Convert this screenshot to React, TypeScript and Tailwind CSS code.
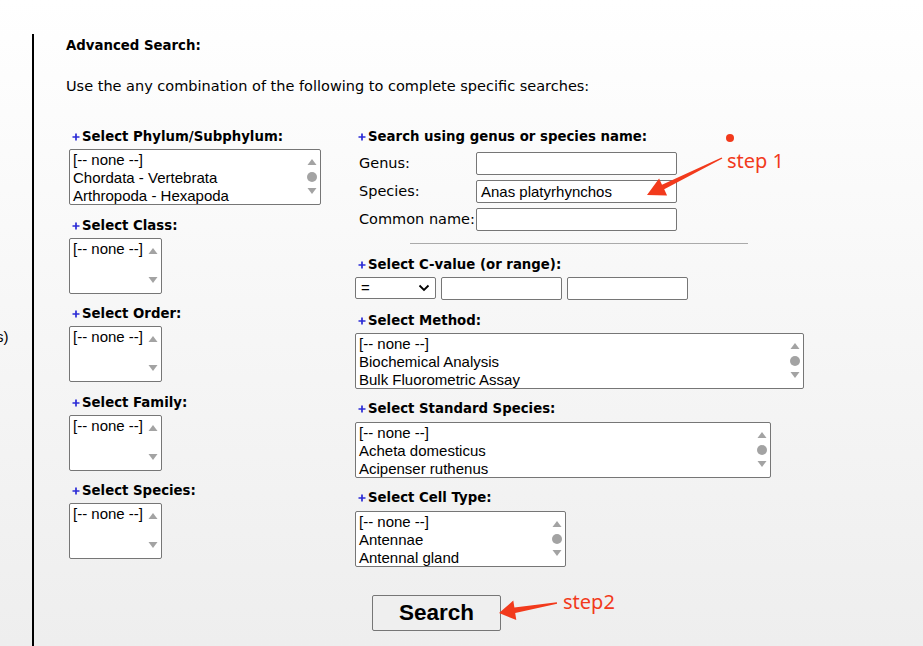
import React from "react"

const sans = "font-['DejaVu_Sans',Verdana,sans-serif]"
const arial = "font-['Liberation_Sans',Arial,sans-serif]"

function Plus() {
  return (
    <svg width="8" height="8" viewBox="0 0 8 8" className="shrink-0">
      <path d="M4 0.5v7M0.5 4h7" stroke="#2b2bd6" strokeWidth="1.7" />
    </svg>
  )
}

function Label({ text }: { text: string }) {
  return (
    <div className="flex items-center gap-[2px] ml-[3px] h-[16px] text-[13.3px] font-bold leading-[16px] text-black">
      <Plus />
      <span>{text}</span>
    </div>
  )
}

function Tri({ up }: { up?: boolean }) {
  return (
    <svg width="10" height="8" viewBox="0 0 10 8">
      <path d={up ? "M5 1 L9.5 7 H0.5 Z" : "M0.5 1 H9.5 L5 7 Z"} fill="#a3a3a3" />
    </svg>
  )
}

function ListBox({ items, w }: { items: string[]; w: string }) {
  const many = items.length > 1
  return (
    <div className={`flex h-[56px] ${w} border border-[#767676] rounded-[2px] bg-white ${arial}`}>
      <div className="flex-1 pl-[3px] pt-[1px] text-[15px] leading-[18px] text-black whitespace-nowrap overflow-hidden">
        {items.map((t) => (
          <div key={t}>{t}</div>
        ))}
      </div>
      <div className="w-[14px] mr-[1px] flex flex-col items-center justify-between pt-[8px] pb-[9px]">
        <Tri up />
        {many && <div className="w-[10px] h-[10px] rounded-full bg-[#a3a3a3]" />}
        <Tri />
      </div>
    </div>
  )
}

function TextBox({ value }: { value?: string }) {
  return (
    <div className={`h-[23px] w-[201px] border border-[#767676] rounded-[2px] bg-white pl-[4px] text-[15px] leading-[21px] text-black ${arial}`}>
      {value}
    </div>
  )
}

function LeftGroup({ label, items, w, first }: { label: string; items: string[]; w: string; first?: boolean }) {
  return (
    <div className={first ? "" : "mt-[12.5px]"}>
      <Label text={label} />
      <div className="mt-[4px]">
        <ListBox items={items} w={w} />
      </div>
    </div>
  )
}

export default function App() {
  return (
    <div className={`relative h-[646px] w-[923px] overflow-hidden bg-gradient-to-b from-white to-[#eeeeee] ${sans}`}>
      <div className="flex h-full">
        {/* sidebar, cut off at the left edge */}
        <div className="w-[32px] shrink-0 overflow-hidden pt-[328px]">
          <div className={`-ml-[4px] text-[15px] leading-[18px] text-black ${arial}`}>s)</div>
        </div>

        <div className="mt-[34px] border-l-2 border-black pl-[32px] flex-1">
          <div className="pt-[4px] text-[13.3px] font-bold leading-[16px]">Advanced Search:</div>
          <div className="mt-[24px] text-[14.5px] leading-[16px]">
            Use the any combination of the following to complete specific searches:
          </div>

          <div className="mt-[35px] flex">
            {/* left column */}
            <div className="w-[286px] shrink-0 ml-[3px]">
              <LeftGroup first label="Select Phylum/Subphylum:" w="w-[252px]" items={["[-- none --]", "Chordata - Vertebrata", "Arthropoda - Hexapoda"]} />
              <LeftGroup label="Select Class:" w="w-[93px]" items={["[-- none --]"]} />
              <LeftGroup label="Select Order:" w="w-[93px]" items={["[-- none --]"]} />
              <LeftGroup label="Select Family:" w="w-[93px]" items={["[-- none --]"]} />
              <LeftGroup label="Select Species:" w="w-[93px]" items={["[-- none --]"]} />
            </div>

            {/* right column */}
            <div className="flex-1">
              <Label text="Search using genus or species name:" />
              <div className="mt-[7px] flex flex-col gap-[5px] pl-[4px] text-[14.5px] leading-[23px]">
                {[
                  ["Genus:", ""],
                  ["Species:", "Anas platyrhynchos"],
                  ["Common name:", ""],
                ].map(([l, v]) => (
                  <div key={l} className="flex">
                    <div className="w-[117px] shrink-0">{l}</div>
                    <TextBox value={v} />
                  </div>
                ))}
              </div>
              <div className="ml-[55px] mt-[12px] w-[338px] h-[1px] bg-[#aaaaaa]" />

              <div className="mt-[13px]">
                <Label text="Select C-value (or range):" />
              </div>
              <div className="mt-[4px] flex gap-[5px]">
                <div className={`h-[22px] w-[81px] border border-[#767676] rounded-[2px] bg-white flex items-center justify-between px-[5px] text-[15px] ${arial}`}>
                  <span>=</span>
                  <svg width="12" height="8" viewBox="0 0 12 8">
                    <path d="M1.5 1.5 L6 6 L10.5 1.5" stroke="#000" strokeWidth="1.8" fill="none" />
                  </svg>
                </div>
                <div className="h-[23px] w-[121px] border border-[#767676] rounded-[2px] bg-white" />
                <div className="h-[23px] w-[121px] border border-[#767676] rounded-[2px] bg-white" />
              </div>

              <div className="mt-[13px]">
                <Label text="Select Method:" />
              </div>
              <div className="mt-[4px]">
                <ListBox w="w-[449px]" items={["[-- none --]", "Biochemical Analysis", "Bulk Fluorometric Assay"]} />
              </div>

              <div className="mt-[12px]">
                <Label text="Select Standard Species:" />
              </div>
              <div className="mt-[5px]">
                <ListBox w="w-[416px]" items={["[-- none --]", "Acheta domesticus", "Acipenser ruthenus"]} />
              </div>

              <div className="mt-[12px]">
                <Label text="Select Cell Type:" />
              </div>
              <div className="mt-[5px]">
                <ListBox w="w-[211px]" items={["[-- none --]", "Antennae", "Antennal gland"]} />
              </div>

              <button className={`ml-[17px] mt-[28px] h-[36px] w-[129px] border border-[#767676] rounded-[2px] bg-[#efefef] text-[22.5px] font-bold text-black ${arial}`}>
                Search
              </button>
            </div>
          </div>
        </div>
      </div>

      {/* red annotations */}
      <svg className="absolute inset-0 pointer-events-none" width="923" height="646">
        <circle cx="730" cy="138" r="4" fill="#f23a1c" />
        <polygon points="722.4,158.6 664.2,189.2 667.1,195.6 647,195 659.1,178.4 662,184.8 721.6,157.4" fill="#f23a1c" />
        <polygon points="557.1,603.7 515.2,613 516.3,620 499,613 513.3,600.6 514.4,607.6 556.9,602.3" fill="#f23a1c" />
      </svg>
      <div className="absolute left-[727px] top-[148px] text-[20px] leading-[26px] text-[#f23a1c] font-['Noto_Sans',sans-serif]">step 1</div>
      <div className="absolute left-[563px] top-[589px] text-[20px] leading-[26px] text-[#f23a1c] font-['Noto_Sans',sans-serif]">step2</div>
    </div>
  )
}
